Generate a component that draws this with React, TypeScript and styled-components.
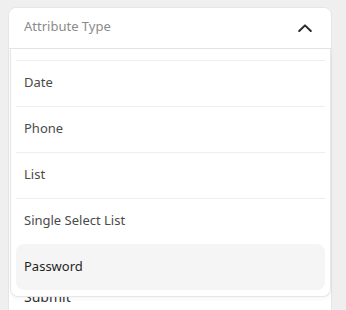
import React from "react";
import styled, { createGlobalStyle } from "styled-components";

const GlobalStyle = createGlobalStyle`
  html, body { margin: 0; padding: 0; }
  body {
    background: #f0efef;
    font-family: "Noto Sans", "Open Sans", sans-serif;
    -webkit-font-smoothing: antialiased;
  }
`;

const Page = styled.div`
  padding: 7px 14px 0 8px;
  height: 310px;
  box-sizing: border-box;
  overflow: hidden;
`;

const Card = styled.div`
  background: #ffffff;
  border: 1px solid #e6e6e6;
  border-radius: 8px;
  height: 320px;
  box-sizing: border-box;
`;

const Select = styled.div`
  position: relative;
`;

const Header = styled.div`
  height: 41px;
  box-sizing: border-box;
  display: flex;
  align-items: center;
  justify-content: space-between;
  padding: 0 19px 0 15px;
  border-bottom: 1px solid #e4e4e4;
  border-radius: 8px 8px 0 0;
  background: #fff;
`;

const Placeholder = styled.span`
  font-size: 13px;
  color: #8a8a8a;
  padding-bottom: 4px;
`;

const Menu = styled.ul`
  position: absolute;
  top: 41px;
  left: 1px;
  right: 0px;
  margin: 0;
  list-style: none;
  background: #fff;
  border: 1px solid #e6e6e6;
  border-top: none;
  border-radius: 0 0 8px 8px;
  padding: 11px 5px 6px;
  box-shadow: 0 2px 4px rgba(0, 0, 0, 0.04);
  z-index: 2;
`;

const Item = styled.li<{ $active?: boolean }>`
  height: 46px;
  box-sizing: border-box;
  display: flex;
  align-items: center;
  padding: 0 8px 4px;
  font-size: 13px;
  color: ${(p) => (p.$active ? "#1f1f1f" : "#4a4a4a")};
  border-top: 1px solid ${(p) => (p.$active ? "transparent" : "#eeeeee")};
  background: ${(p) => (p.$active ? "#f5f5f5" : "transparent")};
  border-radius: ${(p) => (p.$active ? "8px" : "0")};
`;

const Footer = styled.div`
  padding: 238px 0 0 15px;
  font-size: 14px;
  color: #333;
`;

const items = ["Date", "Phone", "List", "Single Select List", "Password"];

export default function App() {
  return (
    <>
      <GlobalStyle />
      <Page>
        <Card>
          <Select>
            <Header>
              <Placeholder>Attribute Type</Placeholder>
              <svg width="14" height="8" viewBox="0 0 14 8" fill="none">
                <polyline
                  points="1.2,7 7,1.4 12.8,7"
                  stroke="#2b2b2b"
                  strokeWidth="2"
                  strokeLinecap="round"
                  strokeLinejoin="round"
                />
              </svg>
            </Header>
            <Menu>
              {items.map((t) => (
                <Item key={t} $active={t === "Password"}>
                  {t}
                </Item>
              ))}
            </Menu>
          </Select>
          <Footer>Submit</Footer>
        </Card>
      </Page>
    </>
  );
}
